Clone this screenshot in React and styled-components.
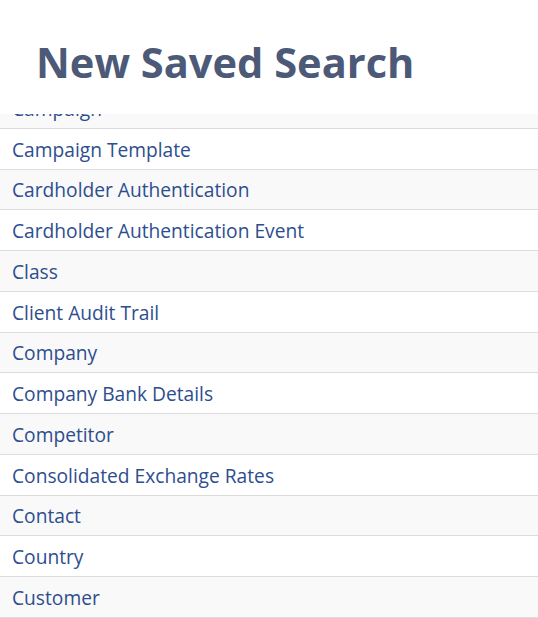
import styled, { createGlobalStyle } from "styled-components"

const GlobalStyle = createGlobalStyle`
    html, body {
        margin: 0;
        padding: 0;
        background: #ffffff;
        font-family: "Open Sans", "Noto Sans", sans-serif;
    }
`

const Page = styled.div`
    width: 538px;
    height: 618px;
    display: flex;
    flex-direction: column;
    overflow: hidden;
    background: #ffffff;
`

const Header = styled.header`
    position: relative;
    z-index: 2;
    flex: 0 0 114px;
    display: flex;
    align-items: center;
    padding: 0 36px;
    background: #ffffff;
    box-sizing: border-box;
`

const Title = styled.h1`
    margin: 0;
    padding-top: 10px;
    font-size: 41.6px;
    font-weight: 700;
    color: #4c5a78;
    letter-spacing: 0;
`

const ListViewport = styled.div`
    flex: 1;
    overflow: hidden;
`

const List = styled.ul`
    list-style: none;
    margin: -26px 0 0 0;
    padding: 0;
`

const Row = styled.li`
    height: 40.75px;
    box-sizing: border-box;
    display: flex;
    align-items: center;
    padding: 1px 12px 0;
    border-bottom: 1px solid #dcdcdc;
    background: ${(p) => (p.$shaded ? "#f9f9f9" : "#ffffff")};
    font-size: 19.2px;
    color: #2d4e8e;
    cursor: pointer;
`

const items = [
    "Campaign",
    "Campaign Template",
    "Cardholder Authentication",
    "Cardholder Authentication Event",
    "Class",
    "Client Audit Trail",
    "Company",
    "Company Bank Details",
    "Competitor",
    "Consolidated Exchange Rates",
    "Contact",
    "Country",
    "Customer",
]

export default function App() {
    return (
        <Page>
            <GlobalStyle />
            <Header>
                <Title>New Saved Search</Title>
            </Header>
            <ListViewport>
                <List>
                    {items.map((name, i) => (
                        <Row key={name} $shaded={i % 2 === 0}>
                            {name}
                        </Row>
                    ))}
                </List>
            </ListViewport>
        </Page>
    )
}
